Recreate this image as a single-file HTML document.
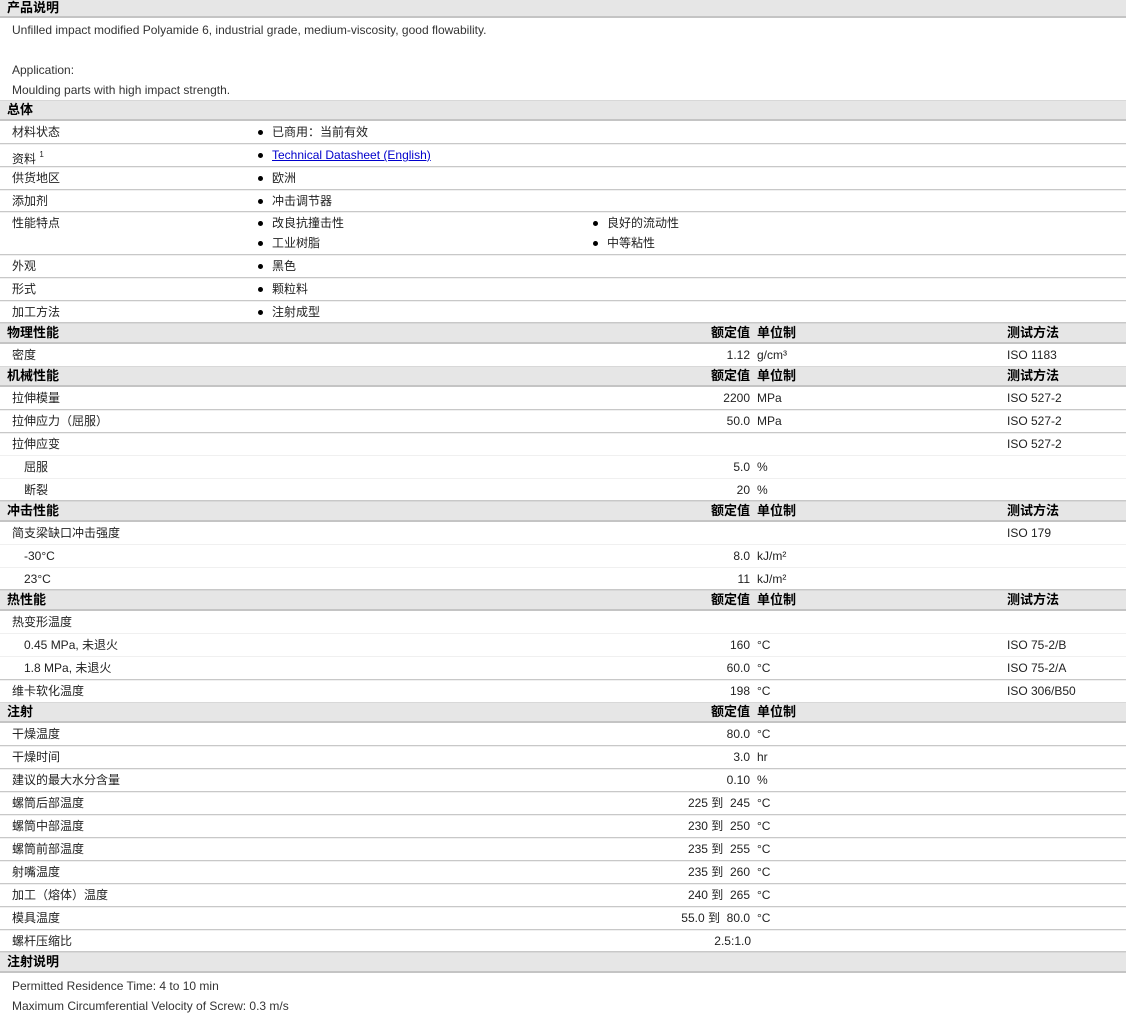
<!DOCTYPE html>
<html><head><meta charset="utf-8">
<style>
*{margin:0;padding:0;box-sizing:border-box}
body{width:1126px;height:1013px;background:#fff;position:relative;overflow:hidden;font-family:"Liberation Sans","Noto Sans CJK SC","WenQuanYi Zen Hei",sans-serif;font-size:12px;color:#222}
.h{position:absolute;left:0;width:1126px;height:21px;background:#e6e6e6;border-top:1px solid #d8d8d8;border-bottom:2px solid #c4c4c4}
.h span{position:absolute;top:1px;font-weight:bold;font-size:13px;color:#000;line-height:16px;white-space:nowrap}
.r{position:absolute;left:0;width:1126px;border-bottom:1px solid #c8c8c8;box-shadow:0 1px 0 #f0f0f0}
.s{position:absolute;left:0;width:1126px;border-bottom:1px solid #f0f0f0}
.r span,.s span,.t{position:absolute;line-height:14px;white-space:nowrap}
.r span,.s span{top:4px}
.l{left:12px}.l2{left:24px}
.b1{left:258px}.b2{left:593px}
.b1:before,.b2:before{content:"";position:absolute;left:0;top:5px;width:5px;height:5px;border-radius:50%;background:#000}
.b1,.b2{padding-left:14px}
.v{right:376px;text-align:right}.u{left:757px}.m{left:1007px}
a{color:#00c;text-decoration:underline}
.c{color:#333}
</style></head><body>

<div class="h" style="top:-4px;height:22px"><span style="left:7px;top:3px">产品说明</span></div>
<div class="t c" style="left:12px;top:23px">Unfilled impact modified Polyamide 6, industrial grade, medium-viscosity, good flowability.</div>
<div class="t c" style="left:12px;top:63px">Application:</div>
<div class="t c" style="left:12px;top:83px">Moulding parts with high impact strength.</div>

<div class="h" style="top:100px"><span style="left:7px">总体</span></div>
<div class="r" style="top:121px;height:23px"><span class="l">材料状态</span><span class="b1">已商用：当前有效</span></div>
<div class="r" style="top:144px;height:23px"><span class="l">资料 <sup style="font-size:8px;vertical-align:6px">1</sup></span><span class="b1"><a>Technical Datasheet (English)</a></span></div>
<div class="r" style="top:167px;height:23px"><span class="l">供货地区</span><span class="b1">欧洲</span></div>
<div class="r" style="top:190px;height:22px"><span class="l">添加剂</span><span class="b1">冲击调节器</span></div>
<div class="r" style="top:212px;height:43px"><span class="l">性能特点</span><span class="b1">改良抗撞击性</span><span class="b2">良好的流动性</span><span class="b1" style="top:24px">工业树脂</span><span class="b2" style="top:24px">中等粘性</span></div>
<div class="r" style="top:255px;height:23px"><span class="l">外观</span><span class="b1">黑色</span></div>
<div class="r" style="top:278px;height:23px"><span class="l">形式</span><span class="b1">颗粒料</span></div>
<div class="r" style="top:301px;height:22px"><span class="l">加工方法</span><span class="b1">注射成型</span></div>

<div class="h" style="top:323px"><span style="left:7px">物理性能</span><span class="v" style="right:376px">额定值</span><span style="left:757px">单位制</span><span style="left:1007px">测试方法</span></div>
<div class="r" style="top:344px;height:23px"><span class="l">密度</span><span class="v">1.12</span><span class="u">g/cm³</span><span class="m">ISO 1183</span></div>

<div class="h" style="top:366px"><span style="left:7px">机械性能</span><span style="right:376px">额定值</span><span style="left:757px">单位制</span><span style="left:1007px">测试方法</span></div>
<div class="r" style="top:387px;height:23px"><span class="l">拉伸模量</span><span class="v">2200</span><span class="u">MPa</span><span class="m">ISO 527-2</span></div>
<div class="r" style="top:410px;height:23px"><span class="l">拉伸应力（屈服）</span><span class="v">50.0</span><span class="u">MPa</span><span class="m">ISO 527-2</span></div>
<div class="s" style="top:433px;height:23px"><span class="l">拉伸应变</span><span class="m">ISO 527-2</span></div>
<div class="s" style="top:456px;height:23px"><span class="l2">屈服</span><span class="v">5.0</span><span class="u">%</span></div>
<div class="r" style="top:479px;height:22px"><span class="l2">断裂</span><span class="v">20</span><span class="u">%</span></div>

<div class="h" style="top:501px"><span style="left:7px">冲击性能</span><span style="right:376px">额定值</span><span style="left:757px">单位制</span><span style="left:1007px">测试方法</span></div>
<div class="s" style="top:522px;height:23px"><span class="l">简支梁缺口冲击强度</span><span class="m">ISO 179</span></div>
<div class="s" style="top:545px;height:23px"><span class="l2">-30°C</span><span class="v">8.0</span><span class="u">kJ/m²</span></div>
<div class="r" style="top:568px;height:22px"><span class="l2">23°C</span><span class="v">11</span><span class="u">kJ/m²</span></div>

<div class="h" style="top:590px"><span style="left:7px">热性能</span><span style="right:376px">额定值</span><span style="left:757px">单位制</span><span style="left:1007px">测试方法</span></div>
<div class="s" style="top:611px;height:23px"><span class="l">热变形温度</span></div>
<div class="s" style="top:634px;height:23px"><span class="l2">0.45 MPa, 未退火</span><span class="v">160</span><span class="u">°C</span><span class="m">ISO 75-2/B</span></div>
<div class="r" style="top:657px;height:23px"><span class="l2">1.8 MPa, 未退火</span><span class="v">60.0</span><span class="u">°C</span><span class="m">ISO 75-2/A</span></div>
<div class="r" style="top:680px;height:23px"><span class="l">维卡软化温度</span><span class="v">198</span><span class="u">°C</span><span class="m">ISO 306/B50</span></div>

<div class="h" style="top:702px"><span style="left:7px">注射</span><span style="right:376px">额定值</span><span style="left:757px">单位制</span></div>
<div class="r" style="top:723px;height:23px"><span class="l">干燥温度</span><span class="v">80.0</span><span class="u">°C</span></div>
<div class="r" style="top:746px;height:23px"><span class="l">干燥时间</span><span class="v">3.0</span><span class="u">hr</span></div>
<div class="r" style="top:769px;height:23px"><span class="l">建议的最大水分含量</span><span class="v">0.10</span><span class="u">%</span></div>
<div class="r" style="top:792px;height:23px"><span class="l">螺筒后部温度</span><span class="v">225 到&nbsp; 245</span><span class="u">°C</span></div>
<div class="r" style="top:815px;height:23px"><span class="l">螺筒中部温度</span><span class="v">230 到&nbsp; 250</span><span class="u">°C</span></div>
<div class="r" style="top:838px;height:23px"><span class="l">螺筒前部温度</span><span class="v">235 到&nbsp; 255</span><span class="u">°C</span></div>
<div class="r" style="top:861px;height:23px"><span class="l">射嘴温度</span><span class="v">235 到&nbsp; 260</span><span class="u">°C</span></div>
<div class="r" style="top:884px;height:23px"><span class="l">加工（熔体）温度</span><span class="v">240 到&nbsp; 265</span><span class="u">°C</span></div>
<div class="r" style="top:907px;height:23px"><span class="l">模具温度</span><span class="v">55.0 到&nbsp; 80.0</span><span class="u">°C</span></div>
<div class="r" style="top:930px;height:22px"><span class="l">螺杆压缩比</span><span class="v" style="right:375px">2.5:1.0</span></div>

<div class="h" style="top:952px"><span style="left:7px">注射说明</span></div>
<div class="t c" style="left:12px;top:979px">Permitted Residence Time: 4 to 10 min</div>
<div class="t c" style="left:12px;top:999px">Maximum Circumferential Velocity of Screw: 0.3 m/s</div>

</body></html>
